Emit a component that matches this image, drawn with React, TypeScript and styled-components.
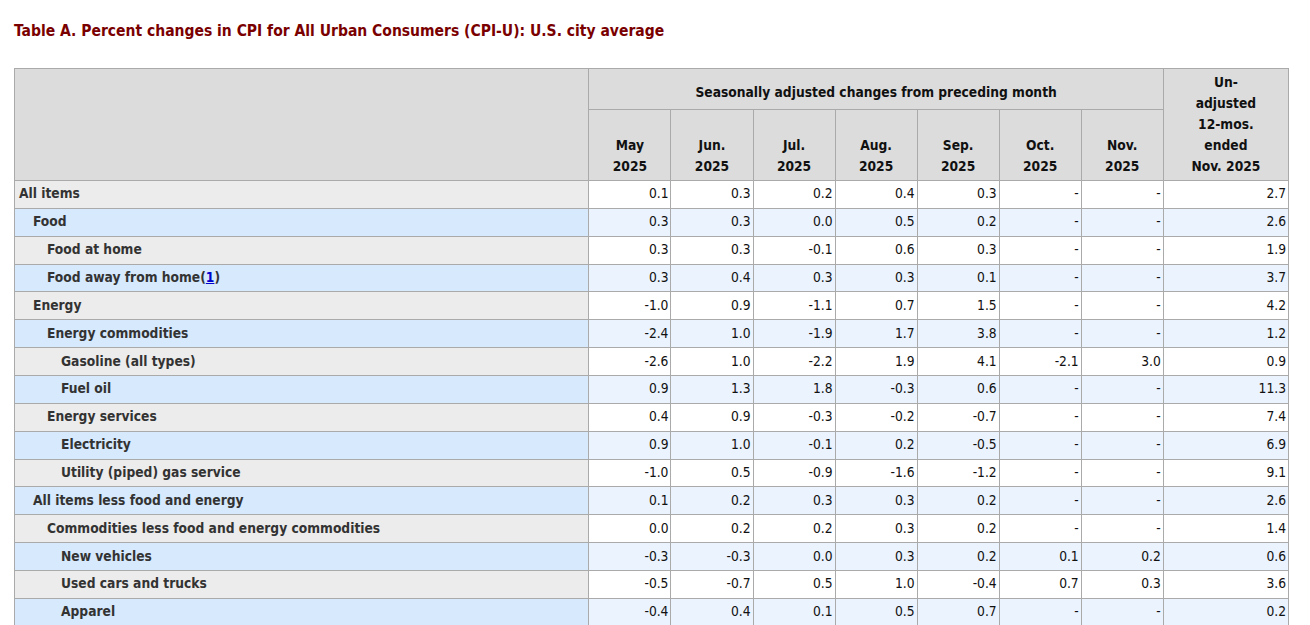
import React from "react";
import styled, { createGlobalStyle } from "styled-components";

const GlobalStyle = createGlobalStyle`
  body {
    margin: 0;
    background: #fff;
    font-family: "DejaVu Sans Condensed", "DejaVu Sans", "Liberation Sans", sans-serif;
  }
`;

const Page = styled.div`
  padding: 20px 22px 0 14px;
`;

const Title = styled.h2`
  margin: 0 0 26px 0;
  font-size: 15.5px;
  line-height: 22px;
  font-weight: bold;
  color: #7a0000;
`;

const Table = styled.table`
  border-collapse: collapse;
  width: 1275px;
  table-layout: fixed;
  font-size: 13.7px;
  color: #111;
`;

const Head = styled.th`
  background: #dcdcdc;
  border: 1px solid #aaa;
  font-weight: bold;
  line-height: 21px;
  padding: 3px 4px 3px;
  text-align: center;
  vertical-align: bottom;
`;

const GroupHead = styled(Head)`
  height: 34px;
  padding: 6px 4px 0;
  vertical-align: middle;
`;

const Row = styled.tr`
  height: 27.87px;
`;

const Label = styled.th<{ $alt: boolean; $level: number }>`
  background: ${(p) => (p.$alt ? "#d6e9fd" : "#ececec")};
  border: 1px solid #aaa;
  text-align: left;
  font-weight: bold;
  color: #333;
  padding: 0 4px 2px ${(p) => 4 + p.$level * 14}px;
  white-space: nowrap;
`;

const Cell = styled.td<{ $alt: boolean }>`
  background: ${(p) => (p.$alt ? "#eaf3fe" : "#fff")};
  border: 1px solid #aaa;
  text-align: right;
  padding: 0 2px 2px 4px;
`;

const Note = styled.a`
  color: #0000cc;
  text-decoration: underline;
`;

type Item = { name: string; level: number; note?: boolean; vals: string[] };

const items: Item[] = [
  { name: "All items", level: 0, vals: ["0.1", "0.3", "0.2", "0.4", "0.3", "-", "-", "2.7"] },
  { name: "Food", level: 1, vals: ["0.3", "0.3", "0.0", "0.5", "0.2", "-", "-", "2.6"] },
  { name: "Food at home", level: 2, vals: ["0.3", "0.3", "-0.1", "0.6", "0.3", "-", "-", "1.9"] },
  { name: "Food away from home", level: 2, note: true, vals: ["0.3", "0.4", "0.3", "0.3", "0.1", "-", "-", "3.7"] },
  { name: "Energy", level: 1, vals: ["-1.0", "0.9", "-1.1", "0.7", "1.5", "-", "-", "4.2"] },
  { name: "Energy commodities", level: 2, vals: ["-2.4", "1.0", "-1.9", "1.7", "3.8", "-", "-", "1.2"] },
  { name: "Gasoline (all types)", level: 3, vals: ["-2.6", "1.0", "-2.2", "1.9", "4.1", "-2.1", "3.0", "0.9"] },
  { name: "Fuel oil", level: 3, vals: ["0.9", "1.3", "1.8", "-0.3", "0.6", "-", "-", "11.3"] },
  { name: "Energy services", level: 2, vals: ["0.4", "0.9", "-0.3", "-0.2", "-0.7", "-", "-", "7.4"] },
  { name: "Electricity", level: 3, vals: ["0.9", "1.0", "-0.1", "0.2", "-0.5", "-", "-", "6.9"] },
  { name: "Utility (piped) gas service", level: 3, vals: ["-1.0", "0.5", "-0.9", "-1.6", "-1.2", "-", "-", "9.1"] },
  { name: "All items less food and energy", level: 1, vals: ["0.1", "0.2", "0.3", "0.3", "0.2", "-", "-", "2.6"] },
  { name: "Commodities less food and energy commodities", level: 2, vals: ["0.0", "0.2", "0.2", "0.3", "0.2", "-", "-", "1.4"] },
  { name: "New vehicles", level: 3, vals: ["-0.3", "-0.3", "0.0", "0.3", "0.2", "0.1", "0.2", "0.6"] },
  { name: "Used cars and trucks", level: 3, vals: ["-0.5", "-0.7", "0.5", "1.0", "-0.4", "0.7", "0.3", "3.6"] },
  { name: "Apparel", level: 3, vals: ["-0.4", "0.4", "0.1", "0.5", "0.7", "-", "-", "0.2"] },
];

const months = ["May", "Jun.", "Jul.", "Aug.", "Sep.", "Oct.", "Nov."];

export default function App() {
  return (
    <Page>
      <GlobalStyle />
      <Title>Table A. Percent changes in CPI for All Urban Consumers (CPI-U): U.S. city average</Title>
      <Table>
        <colgroup>
          <col style={{ width: 574 }} />
          {months.map((m) => (
            <col key={m} style={{ width: 82 }} />
          ))}
          <col style={{ width: 125 }} />
        </colgroup>
        <thead>
          <tr>
            <Head rowSpan={2} />
            <GroupHead colSpan={7}>Seasonally adjusted changes from preceding month</GroupHead>
            <Head rowSpan={2}>
              Un-
              <br />
              adjusted
              <br />
              12-mos.
              <br />
              ended
              <br />
              Nov. 2025
            </Head>
          </tr>
          <tr>
            {months.map((m) => (
              <Head key={m}>
                {m}
                <br />
                2025
              </Head>
            ))}
          </tr>
        </thead>
        <tbody>
          {items.map((it, i) => (
            <Row key={it.name}>
              <Label $alt={i % 2 === 1} $level={it.level}>
                {it.name}
                {it.note && (
                  <>
                    (<Note href="#">1</Note>)
                  </>
                )}
              </Label>
              {it.vals.map((v, j) => (
                <Cell key={j} $alt={i % 2 === 1}>
                  {v}
                </Cell>
              ))}
            </Row>
          ))}
        </tbody>
      </Table>
    </Page>
  );
}
